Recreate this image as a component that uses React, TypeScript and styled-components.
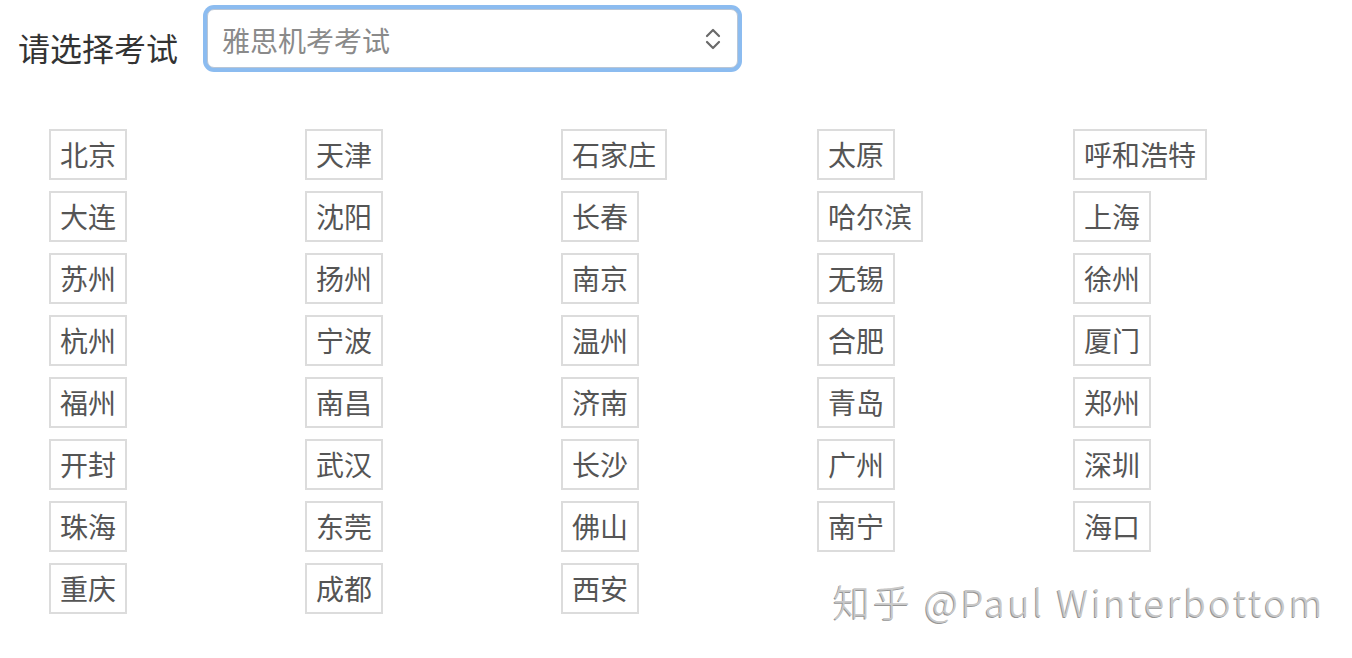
import React from 'react';
import styled, { createGlobalStyle } from 'styled-components';

const GlobalStyle = createGlobalStyle`
  html, body {
    margin: 0;
    padding: 0;
    background: #fff;
    font-family: "Noto Sans CJK SC", "Noto Sans", sans-serif;
  }
`;

const Page = styled.div`
  position: relative;
  width: 1352px;
  height: 658px;
  overflow: hidden;
  background: #fff;
`;

const Header = styled.div`
  display: flex;
  align-items: flex-start;
  padding: 9px 0 0 18px;
  gap: 29px;
`;

const Label = styled.span`
  font-size: 32px;
  color: #333;
  line-height: 32px;
  margin-top: 22px;
  white-space: nowrap;
`;

const SelectBox = styled.div`
  box-sizing: border-box;
  width: 531px;
  height: 59px;
  border: 1px solid #b9c6d6;
  border-radius: 7px;
  box-shadow: 0 0 0 4px #8cbcf0;
  display: flex;
  align-items: center;
  justify-content: space-between;
  padding: 0 14px 0 14px;
  background: #fff;
`;

const Placeholder = styled.span`
  font-size: 28px;
  color: #8a8a8a;
  line-height: 28px;
  margin-top: 2px;
`;

const Chevron = styled.svg`
  width: 20px;
  height: 28px;
`;

const Grid = styled.div`
  display: grid;
  grid-template-columns: repeat(5, 256px);
  row-gap: 11px;
  padding: 61px 0 0 49px;
`;

const Cell = styled.div`
  display: flex;
`;

const Tag = styled.span`
  box-sizing: border-box;
  height: 51px;
  border: 2px solid #dcdcdc;
  padding: 0 9px;
  font-size: 28px;
  line-height: 47px;
  color: #555;
  white-space: nowrap;
`;

const Watermark = styled.div`
  position: absolute;
  left: 833px;
  top: 576px;
  font-family: "Noto Sans CJK SC", "Noto Sans", sans-serif;
  font-size: 37px;
  font-weight: 300;
  line-height: 50px;
  color: #c8c8c8;
  text-shadow: -1px 1px 0 #969696;
  letter-spacing: 3px;
  white-space: nowrap;
`;

const cities = [
  '北京', '天津', '石家庄', '太原', '呼和浩特',
  '大连', '沈阳', '长春', '哈尔滨', '上海',
  '苏州', '扬州', '南京', '无锡', '徐州',
  '杭州', '宁波', '温州', '合肥', '厦门',
  '福州', '南昌', '济南', '青岛', '郑州',
  '开封', '武汉', '长沙', '广州', '深圳',
  '珠海', '东莞', '佛山', '南宁', '海口',
  '重庆', '成都', '西安',
];

export default function App() {
  return (
    <Page>
      <GlobalStyle />
      <Header>
        <Label>请选择考试</Label>
        <SelectBox>
          <Placeholder>雅思机考考试</Placeholder>
          <Chevron viewBox="0 0 20 28" fill="none" stroke="#6a6a6a" strokeWidth="2.2" strokeLinecap="round" strokeLinejoin="round">
            <path d="M4 11 L10 5 L16 11" />
            <path d="M4 17 L10 23 L16 17" />
          </Chevron>
        </SelectBox>
      </Header>
      <Grid>
        {cities.map(city => (
          <Cell key={city}>
            <Tag>{city}</Tag>
          </Cell>
        ))}
      </Grid>
      <Watermark>知乎 @Paul Winterbottom</Watermark>
    </Page>
  );
}
